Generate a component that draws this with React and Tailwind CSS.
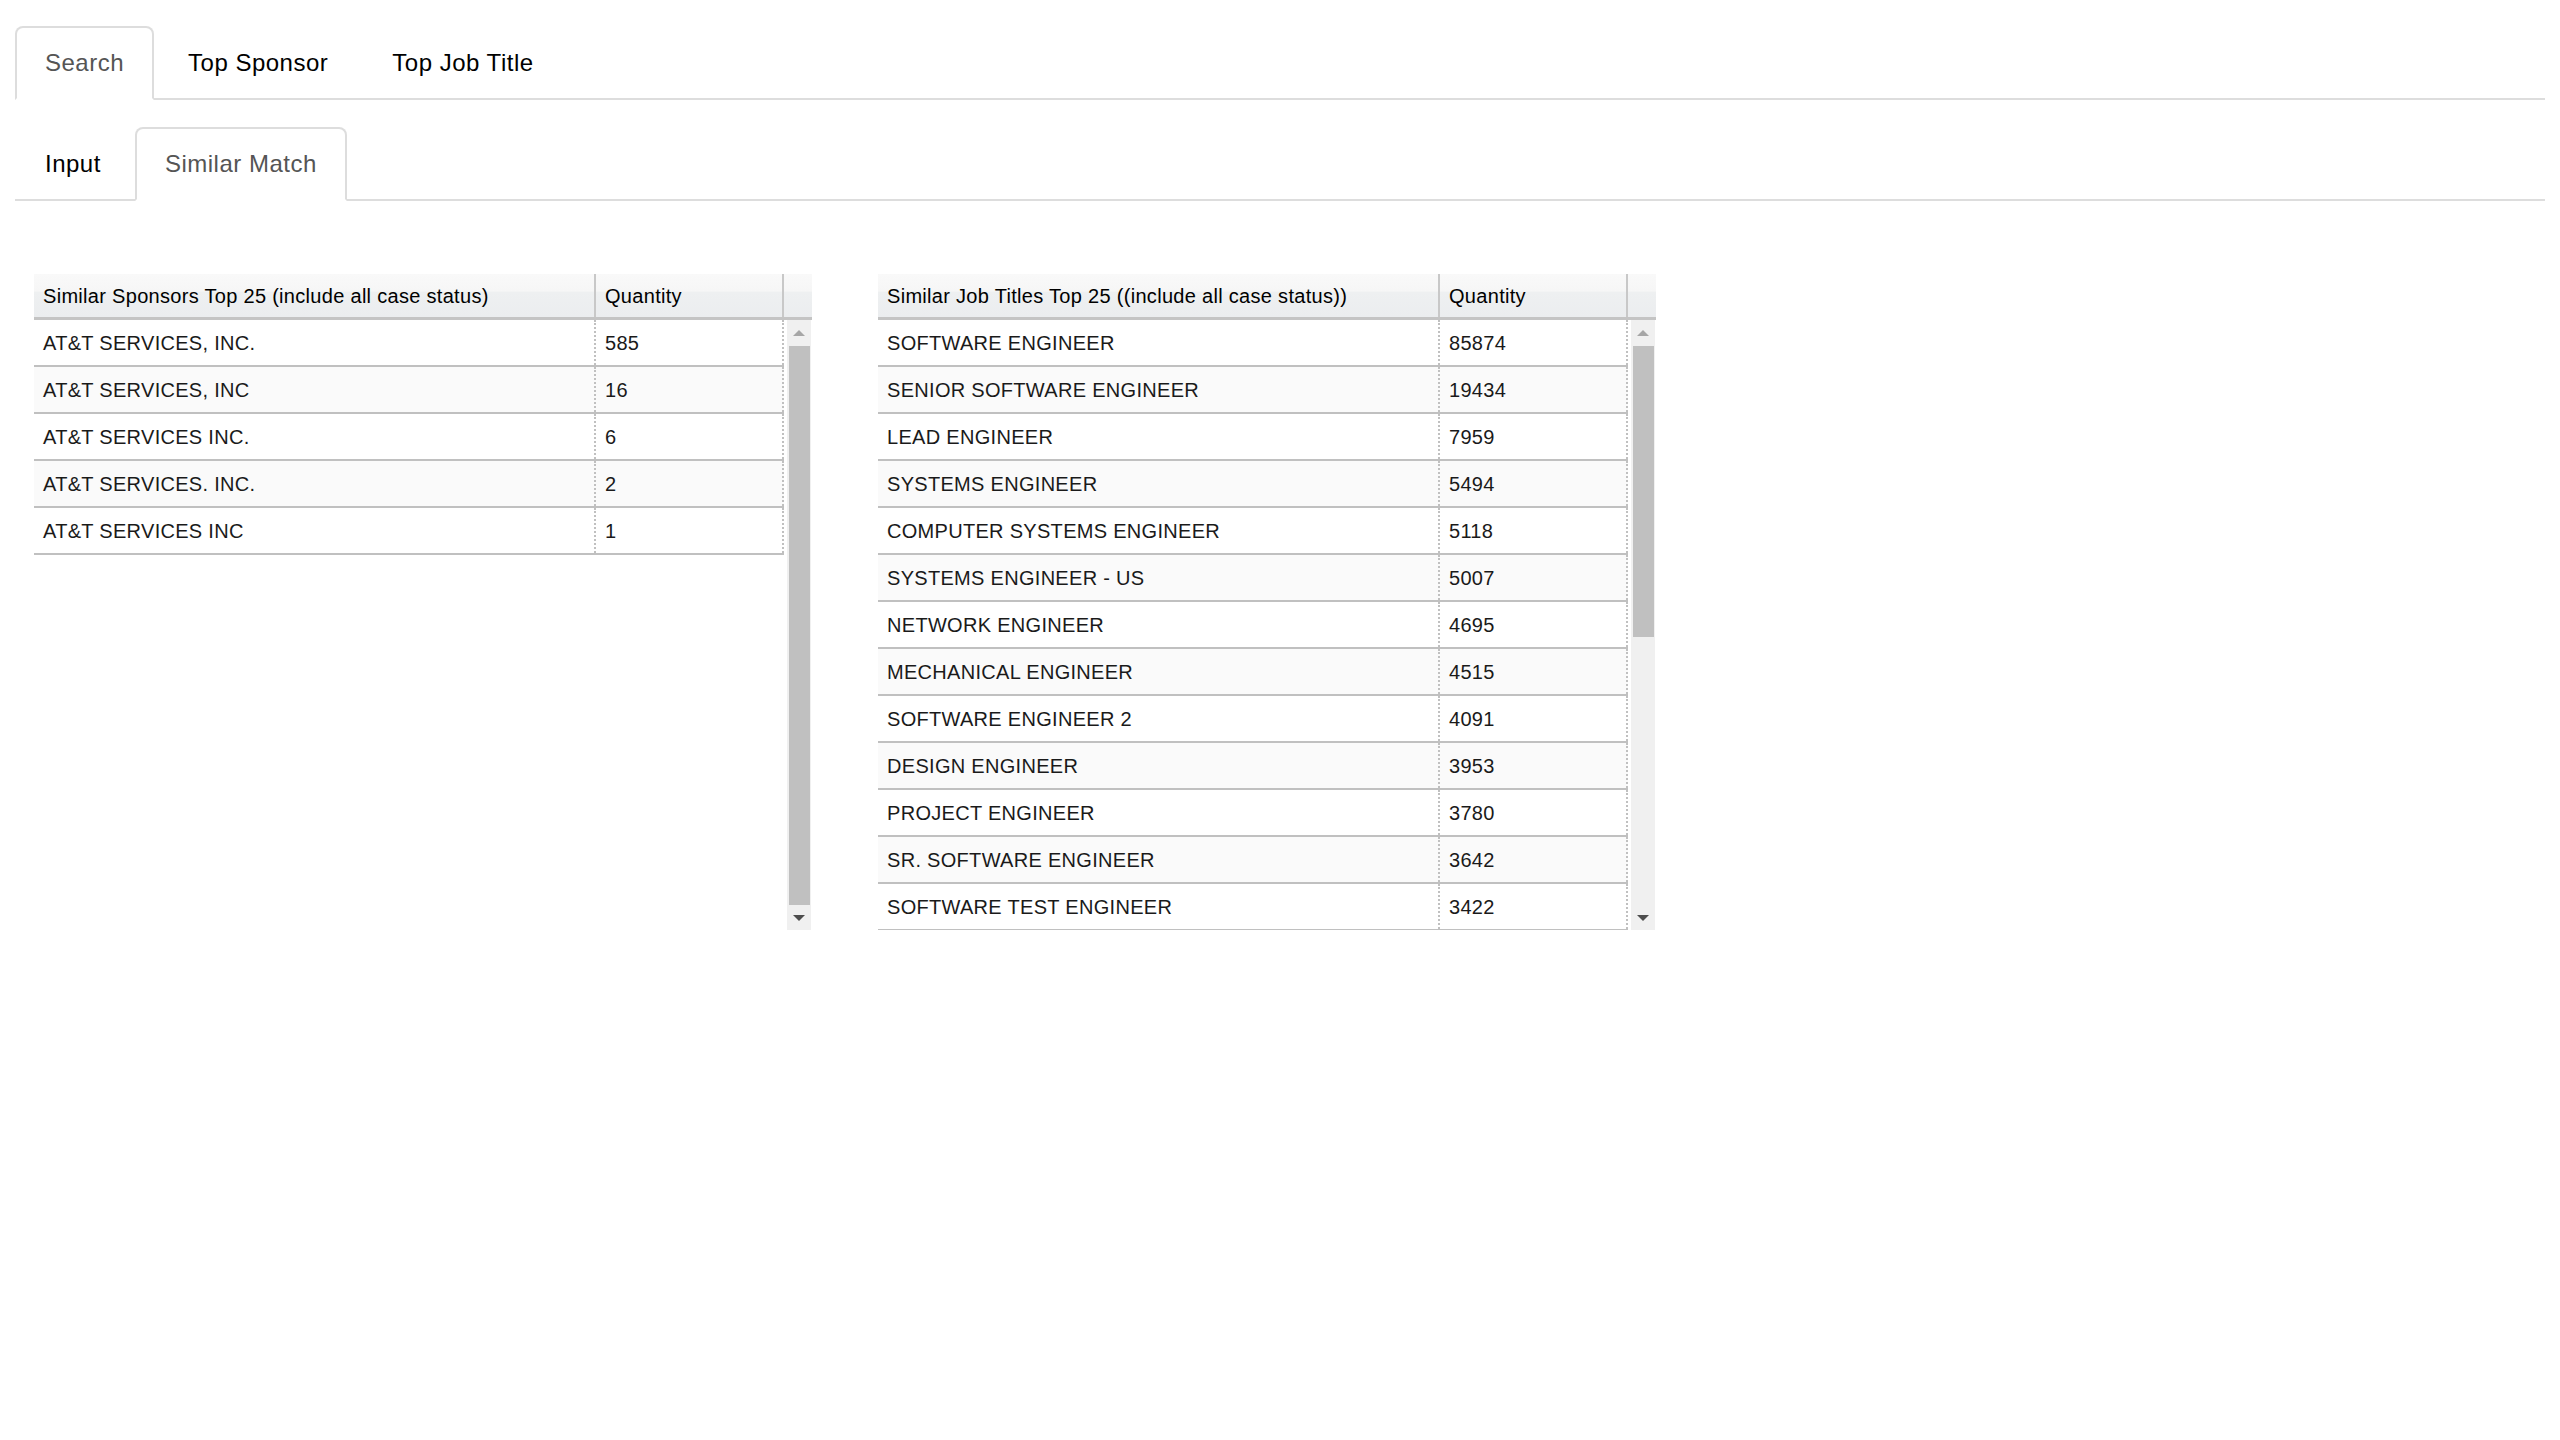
import React from "react";

const sponsors = [
  ["AT&T SERVICES, INC.", "585"],
  ["AT&T SERVICES, INC", "16"],
  ["AT&T SERVICES INC.", "6"],
  ["AT&T SERVICES. INC.", "2"],
  ["AT&T SERVICES INC", "1"],
];

const jobTitles = [
  ["SOFTWARE ENGINEER", "85874"],
  ["SENIOR SOFTWARE ENGINEER", "19434"],
  ["LEAD ENGINEER", "7959"],
  ["SYSTEMS ENGINEER", "5494"],
  ["COMPUTER SYSTEMS ENGINEER", "5118"],
  ["SYSTEMS ENGINEER - US", "5007"],
  ["NETWORK ENGINEER", "4695"],
  ["MECHANICAL ENGINEER", "4515"],
  ["SOFTWARE ENGINEER 2", "4091"],
  ["DESIGN ENGINEER", "3953"],
  ["PROJECT ENGINEER", "3780"],
  ["SR. SOFTWARE ENGINEER", "3642"],
  ["SOFTWARE TEST ENGINEER", "3422"],
];

function Tabs({ items, active }) {
  return (
    <ul className="mx-[15px] flex border-b-2 border-[#ddd]">
      {items.map((item) => (
        <li
          key={item}
          className={
            item === active
              ? "-mb-[2px] mr-[4px] flex h-[74px] items-center rounded-t-[8px] border-2 border-[#ddd] border-b-transparent bg-white px-[28px] text-[24px] tracking-[0.5px] text-[#555]"
              : "-mb-[2px] mr-[4px] flex h-[74px] items-center rounded-t-[8px] border-2 border-transparent px-[28px] text-[24px] tracking-[0.5px] text-black"
          }
        >
          {item}
        </li>
      ))}
    </ul>
  );
}

function Grid({ title, rows, thumb }) {
  return (
    <div className="w-[778px]">
      <div className="flex h-[46px] border-b-[3px] border-[#c4c4c4] bg-[linear-gradient(#f9f9f9,#f6f6f6_40%,#eef0f1_42%,#ebedef)] text-[20px] tracking-[0.3px] text-black">
        <div className="flex w-[562px] items-center border-r-2 border-[#c8c8c8] pl-[9px]">{title}</div>
        <div className="flex w-[188px] items-center border-r-2 border-[#c8c8c8] pl-[9px]">Quantity</div>
        <div className="flex-1" />
      </div>
      <div className="flex h-[610px]">
        <div className="w-[750px] overflow-hidden">
          {rows.map(([name, qty], i) => (
            <div
              key={name}
              className={
                i % 2 === 1
                  ? "flex h-[47px] border-b-2 border-[#c0c0c0] bg-[#fafafa] text-[20px] tracking-[0.3px] text-[#1a1a1a]"
                  : "flex h-[47px] border-b-2 border-[#c0c0c0] bg-white text-[20px] tracking-[0.3px] text-[#1a1a1a]"
              }
            >
              <div className="flex w-[562px] items-center border-r-2 border-dotted border-[#c0c0c0] pl-[9px]">{name}</div>
              <div className="flex w-[188px] items-center border-r-2 border-dotted border-[#c0c0c0] pl-[9px]">{qty}</div>
            </div>
          ))}
        </div>
        <div className="ml-[3px] flex w-[24px] flex-col bg-[#f0f0f0]">
          <div className="flex h-[26px] items-center justify-center">
            <svg width="12" height="6" viewBox="0 0 12 6">
              <polygon points="0,6 6,0 12,6" fill="#a6a6a6" />
            </svg>
          </div>
          <div className="ml-[2px] mr-[1px] bg-[#c0c0c0]" style={{ height: thumb }} />
          <div className="flex-1" />
          <div className="flex h-[25px] items-center justify-center">
            <svg width="12" height="6" viewBox="0 0 12 6">
              <polygon points="0,0 12,0 6,6" fill="#4d4d4d" />
            </svg>
          </div>
        </div>
      </div>
    </div>
  );
}

export default function App() {
  return (
    <div className="min-h-screen bg-white pt-[26px] font-['Liberation_Sans',Arial,sans-serif]">
      <Tabs items={["Search", "Top Sponsor", "Top Job Title"]} active="Search" />
      <div className="mt-[27px]">
        <Tabs items={["Input", "Similar Match"]} active="Similar Match" />
      </div>
      <div className="mt-[73px] flex gap-[66px] pl-[34px]">
        <Grid title="Similar Sponsors Top 25 (include all case status)" rows={sponsors} thumb={559} />
        <Grid title="Similar Job Titles Top 25 ((include all case status))" rows={jobTitles} thumb={291} />
      </div>
    </div>
  );
}
